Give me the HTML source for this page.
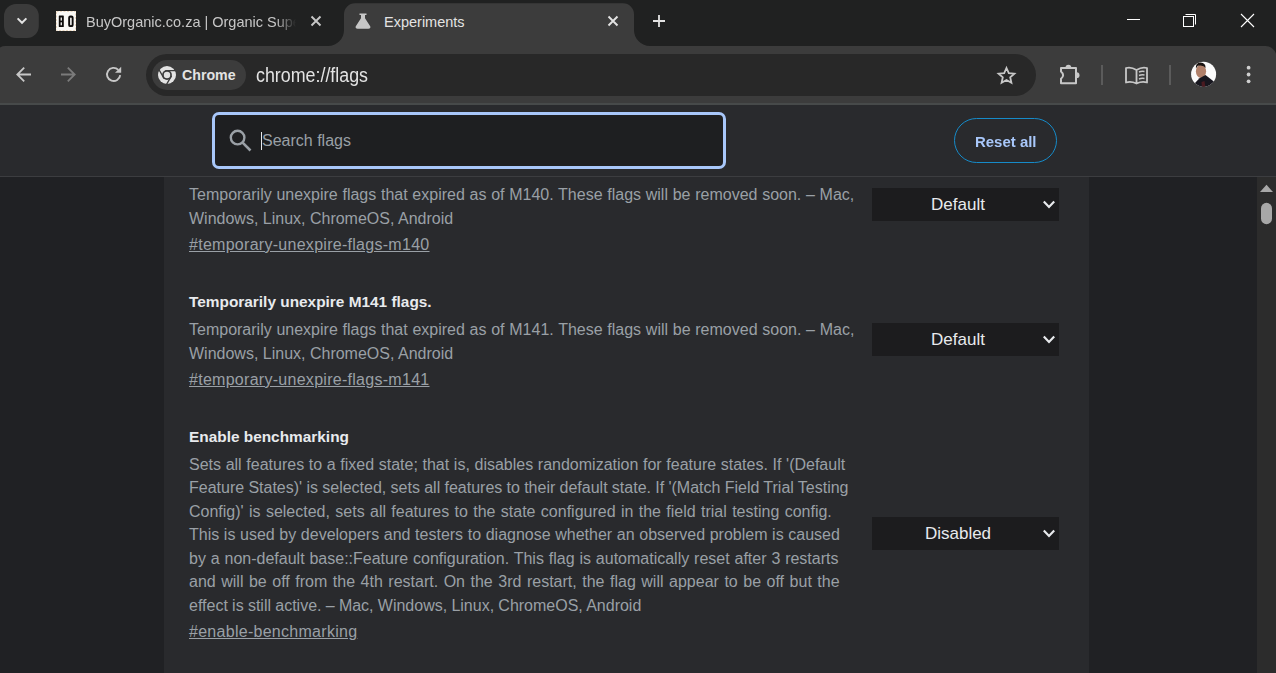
<!DOCTYPE html>
<html><head><meta charset="utf-8">
<style>
*{box-sizing:border-box}
html,body{margin:0;padding:0}
body{width:1276px;height:673px;overflow:hidden;position:relative;background:#202124;font-family:"Liberation Sans",sans-serif}
.abs{position:absolute}
#header{left:0;top:105px;width:1276px;height:71px;background:#292a2d}
#hline{left:0;top:176px;width:1276px;height:1px;background:#3c3d40}
#search{left:212px;top:112px;width:514px;height:57px;border:3px solid #a8c7fa;border-radius:7px;background:#1e1f21}
#reset{left:954px;top:118px;width:103px;height:45px;border:1px solid #168bc9;border-radius:23px}
#panel{left:164px;top:177px;width:925px;height:496px;background:#292a2d}
#sbar{left:1257px;top:177px;width:19px;height:496px;background:#2c2c2c}
.t{position:absolute;white-space:nowrap;font-size:16px;line-height:20px;transform-origin:0 0}
.desc{color:#9aa0a6}
.ttl{color:#e8eaed;font-weight:bold;font-size:15.4px}
.lnk{color:#9aa0a6;text-decoration:underline;letter-spacing:0.28px}
.sel{position:absolute;left:872px;width:187px;height:33px;background:#1c1c1e;color:#e8eaed;font-size:17px}
.sel span{position:absolute;left:1px;width:170px;text-align:center;top:7px;line-height:20px}
.sel svg{position:absolute;left:171px;top:12.8px;overflow:visible}
</style></head><body>
<svg class="abs" style="left:0;top:0" width="1276" height="105" viewBox="0 0 1276 105">
  <rect x="0" y="0" width="1276" height="60" fill="#202121"/>
  <!-- toolbar -->
  <path d="M0 47.4 A11 11 0 0 1 5.4 46 L1265.5 46 A11 11 0 0 1 1276 53.7 L1276 103 L0 103 Z" fill="#3c3c3c"/>
  <rect x="0" y="103" width="1276" height="2" fill="#474a4a"/>
  <!-- active tab -->
  <path d="M328 46 A16 16 0 0 0 344 30 L344 14.3 A11 11 0 0 1 355 3.3 L623 3.3 A11 11 0 0 1 634 14.3 L634 30 A16 16 0 0 0 650 46 Z" fill="#3c3c3c"/>
  <!-- tab search -->
  <rect x="4" y="4" width="34.8" height="34" rx="12" fill="#3b3b3b"/>
  <path d="M17.6 18.4 L22 22.8 L26.4 18.4" fill="none" stroke="#e3e3e3" stroke-width="2"/>
  <!-- tab 1 favicon -->
  <rect x="56" y="11" width="20" height="20" fill="#f9f8f5"/>
  <rect x="56.5" y="11.5" width="19" height="19" fill="none" stroke="#ead7bf" stroke-width="1" stroke-dasharray="2 1.5"/>
  <rect x="58.8" y="15.5" width="5" height="11.6" rx="0.6" fill="#0d0b0a"/>
  <rect x="60.6" y="17.5" width="1.3" height="3.1" fill="#f9f8f5"/>
  <rect x="60.6" y="22.3" width="1.3" height="3" fill="#f9f8f5"/>
  <rect x="68.2" y="15.5" width="5.4" height="11.6" rx="2.2" fill="#0d0b0a"/>
  <rect x="70.1" y="17.6" width="1.6" height="7.6" rx="0.8" fill="#f9f8f5"/>
  <!-- tab 1 close -->
  <path d="M311.5 16.5 L320.5 25.5 M320.5 16.5 L311.5 25.5" stroke="#c7c7c7" stroke-width="1.9"/>
  <!-- flask -->
  <path d="M359.5 14.2 L366.5 14.2 M361.8 14.2 L361.8 18.5 L356.5 26.6 Q356 28 357.5 28 L368.5 28 Q370 28 369.5 26.6 L364.2 18.5 L364.2 14.2" fill="#c7c7c7" stroke="#c7c7c7" stroke-width="1.6" stroke-linejoin="round"/>
  <!-- tab 2 close -->
  <path d="M608.5 16.5 L617.5 25.5 M617.5 16.5 L608.5 25.5" stroke="#e3e3e3" stroke-width="1.9"/>
  <!-- new tab plus -->
  <path d="M653 21 L665 21 M659 15 L659 27" stroke="#e3e3e3" stroke-width="1.8"/>
  <!-- window controls -->
  <path d="M1127 19.5 L1140 19.5" stroke="#ffffff" stroke-width="1"/>
  <rect x="1183.5" y="16.5" width="10" height="10" fill="none" stroke="#ffffff" stroke-width="1"/>
  <path d="M1185.5 14.5 L1195.5 14.5 L1195.5 24.5" fill="none" stroke="#ffffff" stroke-width="1"/>
  <path d="M1241 14 L1254 27 M1254 14 L1241 27" stroke="#ffffff" stroke-width="1.1"/>
  <!-- back / forward / reload -->
  <path d="M17.3 74.5 L31 74.5 M24.2 67.6 L17.3 74.5 L24.2 81.4" fill="none" stroke="#c7c7c7" stroke-width="1.8"/>
  <path d="M61 74.5 L74.7 74.5 M67.8 67.6 L74.7 74.5 L67.8 81.4" fill="none" stroke="#7b7b7b" stroke-width="1.8"/>
  <path d="M118.3 69.8 A6.6 6.6 0 1 0 120.18 75.08" fill="none" stroke="#c7c7c7" stroke-width="1.9"/>
  <path d="M121.2 66.8 L121.2 72.8 L115 72.8 Z" fill="#c7c7c7"/>
  <!-- omnibox -->
  <rect x="146" y="54" width="890" height="42" rx="21" fill="#282828"/>
  <rect x="152" y="60" width="94" height="30" rx="15" fill="#3c3c3c"/>
  <!-- chrome logo -->
  <circle cx="167" cy="75" r="9" fill="#e3e3e3"/>
  <circle cx="167" cy="75" r="4.9" fill="#3c3c3c"/>
  <path d="M165.50 70.70 L176.50 70.70 M171.47 75.85 L165.97 85.38 M164.03 78.45 L158.53 68.92" stroke="#3c3c3c" stroke-width="1.3"/>
  <circle cx="167" cy="75" r="3.2" fill="#e3e3e3"/>
  <!-- star -->
  <path transform="translate(0 0.7)" d="M1006.5 67.3 L1008.8 72.4 L1014.4 72.9 L1010.2 76.6 L1011.4 82.1 L1006.5 79.3 L1001.6 82.1 L1002.8 76.6 L998.6 72.9 L1004.2 72.4 Z" fill="none" stroke="#c7c7c7" stroke-width="1.8" stroke-linejoin="miter"/>
  <!-- puzzle -->
  <path d="M1061 68 L1076 68 L1076 83.2 L1061 83.2 L1061 78.8 Q1065.2 75.2 1061 71.6 Z" fill="none" stroke="#c7c7c7" stroke-width="2" stroke-linejoin="round"/><path d="M1065.5 67.6 A2.9 2.9 0 0 1 1071.3 67.6 Z" fill="#c7c7c7"/><path d="M1076.6 72.3 A2.9 2.9 0 0 1 1076.6 78.1 Z" fill="#c7c7c7"/>
  <!-- separators -->
  <rect x="1101" y="65" width="2" height="20" fill="#5b5b5b"/>
  <rect x="1169" y="65" width="2" height="20" fill="#5b5b5b"/>
  <!-- reading list book -->
  <path d="M1136.5 70 Q1131 66.5 1126 68 L1126 82.5 Q1131 81 1136.5 83.5 Q1142 81 1147 82.5 L1147 68 Q1142 66.5 1136.5 70 Z M1136.5 70 L1136.5 83.5" fill="none" stroke="#c7c7c7" stroke-width="1.8" stroke-linejoin="round"/>
  <path d="M1139 72 Q1141.5 71 1144.5 71.5 M1139 75.5 Q1141.5 74.5 1144.5 75 M1139 79 Q1141.5 78 1144.5 78.5" fill="none" stroke="#c7c7c7" stroke-width="1.5"/>
  <!-- avatar -->
  <defs><clipPath id="av"><circle cx="1203.6" cy="74.2" r="12.5"/></clipPath></defs>
  <g clip-path="url(#av)">
    <rect x="1190" y="61" width="27" height="27" fill="#fbfbfb"/>
    <ellipse cx="1201" cy="71.3" rx="5.1" ry="6.6" fill="#b0806a"/>
    <path d="M1193 88 L1195 83 L1199.5 78.2 L1205.5 75 L1213.8 81.5 L1216 88 Z" fill="#17161e"/>
    <path d="M1201.5 82 L1204.5 81 L1205.5 88 L1202 88 Z" fill="#4a1a20"/>
    <path d="M1195.9 68.6 Q1195.4 62.4 1200.6 62.6 Q1205.6 62.8 1205.6 68 Q1203.5 64.6 1197.8 65.8 Z" fill="#1a1412"/>
  </g>
  <!-- menu dots -->
  <circle cx="1248.6" cy="67.7" r="1.9" fill="#cfcfcf"/>
  <circle cx="1248.6" cy="74.5" r="1.9" fill="#cfcfcf"/>
  <circle cx="1248.6" cy="81.3" r="1.9" fill="#cfcfcf"/>
</svg>
<div class="abs" style="left:86px;top:12px;width:210px;height:20px;overflow:hidden;white-space:nowrap;font-size:14.5px;line-height:20px;color:#c7c7c7;-webkit-mask-image:linear-gradient(to right,#000 190px,transparent 210px)">BuyOrganic.co.za | Organic Super Store</div>
<div class="abs" style="left:384px;top:12px;white-space:nowrap;font-size:14.5px;line-height:20px;color:#e3e3e3">Experiments</div>
<div class="abs" style="left:182px;top:65px;white-space:nowrap;font-size:14.2px;font-weight:bold;line-height:20px;color:#e3e3e3">Chrome</div>
<div class="abs" style="left:256px;top:62.5px;white-space:nowrap;font-size:20px;line-height:24px;color:#e3e3e3;transform-origin:0 0;transform:scaleX(0.892)">chrome://flags</div>

<div id="header" class="abs"></div>
<div id="hline" class="abs"></div>
<div id="search" class="abs"></div>
<svg class="abs" style="left:228px;top:128px" width="26" height="26" viewBox="0 0 26 26">
  <circle cx="9.6" cy="9.6" r="6.8" fill="none" stroke="#9aa0a6" stroke-width="2.4"/>
  <path d="M14.6 14.6 L22.5 22.5" stroke="#9aa0a6" stroke-width="2.6"/>
</svg>
<div class="abs" style="left:261px;top:132px;width:1px;height:18px;background:#e8eaed"></div>
<div class="abs" style="left:262px;top:131px;white-space:nowrap;font-size:16px;line-height:20px;color:#9aa0a6">Search flags</div>
<div id="reset" class="abs"></div>
<div class="abs" style="left:975px;top:131.5px;white-space:nowrap;font-size:15.5px;font-weight:bold;transform-origin:0 0;transform:scaleX(0.965);line-height:20px;color:#a8c7fa">Reset all</div>
<div id="panel" class="abs"></div>
<div id="sbar" class="abs"></div>
<svg class="abs" style="left:1257px;top:177px" width="19" height="60" viewBox="0 0 19 60">
  <path d="M3 15 L16 15 L9.5 7.7 Z" fill="#a8a8a8"/>
  <rect x="4" y="25.8" width="11" height="21.4" rx="5.5" fill="#a8a8a8"/>
</svg>

<div class="t desc" style="left:189px;top:185px;word-spacing:0.260px">Temporarily unexpire flags that expired as of M140. These flags will be removed soon. – Mac,</div>
<div class="t desc" style="left:189px;top:209px">Windows, Linux, ChromeOS, Android</div>
<div class="t lnk" style="left:189px;top:235px">#temporary-unexpire-flags-m140</div>
<div class="sel" style="top:188px"><span>Default</span><svg width="12" height="8" viewBox="0 0 12 8"><path d="M0.8 0.6 L6 5.9 L11.2 0.6" fill="none" stroke="#e8eaed" stroke-width="2.2"/></svg></div>

<div class="t ttl" style="left:189px;top:292px">Temporarily unexpire M141 flags.</div>
<div class="t desc" style="left:189px;top:320px;word-spacing:0.267px">Temporarily unexpire flags that expired as of M141. These flags will be removed soon. – Mac,</div>
<div class="t desc" style="left:189px;top:344px">Windows, Linux, ChromeOS, Android</div>
<div class="t lnk" style="left:189px;top:370px">#temporary-unexpire-flags-m141</div>
<div class="sel" style="top:323px"><span>Default</span><svg width="12" height="8" viewBox="0 0 12 8"><path d="M0.8 0.6 L6 5.9 L11.2 0.6" fill="none" stroke="#e8eaed" stroke-width="2.2"/></svg></div>

<div class="t ttl" style="left:189px;top:427px">Enable benchmarking</div>
<div class="t desc" style="left:189px;top:455px;word-spacing:0.200px">Sets all features to a fixed state; that is, disables randomization for feature states. If '(Default</div>
<div class="t desc" style="left:189px;top:478px;word-spacing:-0.173px">Feature States)' is selected, sets all features to their default state. If '(Match Field Trial Testing</div>
<div class="t desc" style="left:189px;top:502px;word-spacing:0.907px">Config)' is selected, sets all features to the state configured in the field trial testing config.</div>
<div class="t desc" style="left:189px;top:525px;word-spacing:0.179px">This is used by developers and testers to diagnose whether an observed problem is caused</div>
<div class="t desc" style="left:189px;top:549px;word-spacing:0.417px">by a non-default base::Feature configuration. This flag is automatically reset after 3 restarts</div>
<div class="t desc" style="left:189px;top:572px;word-spacing:1.075px">and will be off from the 4th restart. On the 3rd restart, the flag will appear to be off but the</div>
<div class="t desc" style="left:189px;top:596px;word-spacing:-0.200px">effect is still active. – Mac, Windows, Linux, ChromeOS, Android</div>
<div class="t lnk" style="left:189px;top:622px">#enable-benchmarking</div>
<div class="sel" style="top:517px"><span>Disabled</span><svg width="12" height="8" viewBox="0 0 12 8"><path d="M0.8 0.6 L6 5.9 L11.2 0.6" fill="none" stroke="#e8eaed" stroke-width="2.2"/></svg></div>
</body></html>
